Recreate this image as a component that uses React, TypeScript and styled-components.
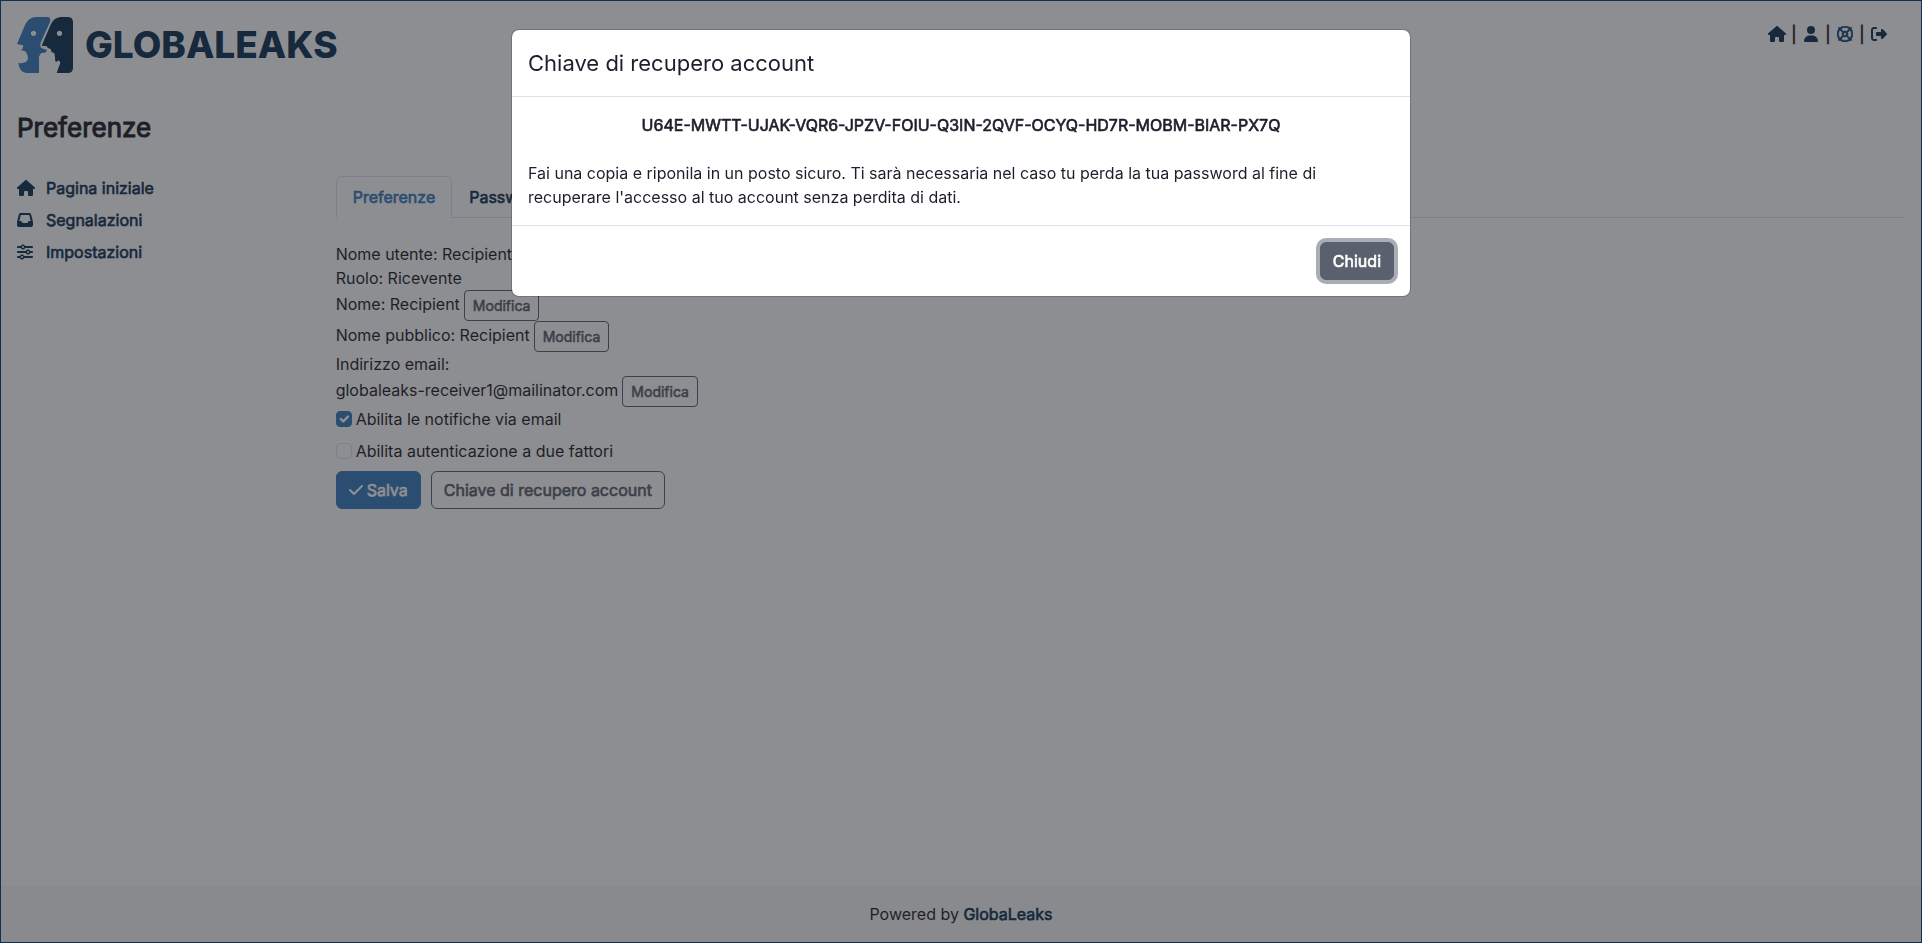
import React from "react";
import styled, { createGlobalStyle, css } from "styled-components";
import {
  FaCheck,
  FaHouse,
  FaInbox,
  FaRegLifeRing,
  FaRightFromBracket,
  FaSliders,
  FaUser,
} from "react-icons/fa6";

const color = {
  text: "#1d1f2b",
  navy: "#103253",
  blue: "#377abc",
  grey: "#5a606d",
  line: "#dce1ec",
  page: "#fdfdfd",
  footer: "#f5f5f5",
};

const GlobalStyle = createGlobalStyle`
  *, *::before, *::after { box-sizing: border-box; }
  body {
    margin: 0;
    background: ${color.page};
    color: ${color.text};
    font-family: Inter, "Liberation Sans", sans-serif;
    font-size: 16px;
    line-height: 24px;
  }
  h1, h2, p, ul { margin: 0; padding: 0; }
  button, input { font: inherit; }
`;

/* Emphasis keeps the regular letter widths and thickens the outline. */
const strong = css`
  font-weight: 400;
  -webkit-text-stroke: 0.04em currentColor;
`;

const Page = styled.div`
  display: flex;
  flex-direction: column;
  min-height: 100vh;
  border: 1px solid #003f84;
`;

const Header = styled.header`
  display: flex;
  justify-content: space-between;
  align-items: flex-start;
  padding: 16px;
`;

const Brand = styled.a`
  display: flex;
  align-items: center;
  gap: 12px;
  color: ${color.navy};
  text-decoration: none;
  font-size: 37px;
  font-weight: 800;
  line-height: 56px;
`;

const Tools = styled.nav`
  display: flex;
  align-items: center;
  padding: 5px 16px;
`;

const ToolLink = styled.a<{ $tone?: string }>`
  display: flex;
  justify-content: center;
  width: 20px;
  color: ${(p) => p.$tone ?? color.navy};
`;

const Divider = styled.span`
  ${strong}
  width: 14px;
  text-align: center;
`;

const Title = styled.h1`
  ${strong}
  padding: 21px 16px 0;
  font-size: 26px;
  line-height: 36px;
`;

const Body = styled.div`
  display: grid;
  grid-template-columns: calc((100% + 24px) / 6 - 24px) 1fr;
  gap: 24px;
  flex: 1;
  align-items: start;
  padding: 30px 16px 0;
`;

const SideMenu = styled.ul`
  display: flex;
  flex-direction: column;
  gap: 8px;
  list-style: none;
`;

const SideLink = styled.a`
  ${strong}
  display: flex;
  align-items: center;
  color: ${color.navy};
  text-decoration: none;
`;

const SideIcon = styled.span`
  display: flex;
  width: 29px;
`;

const TabBar = styled.div`
  display: flex;
  border-bottom: 1px solid ${color.line};
`;

const Tab = styled.button<{ $active?: boolean }>`
  ${strong}
  margin: 0 0 -1px;
  padding: 8px 16px;
  border: 1px solid ${(p) => (p.$active ? color.line : "transparent")};
  border-bottom-color: ${(p) => (p.$active ? color.page : "transparent")};
  border-radius: 6px 6px 0 0;
  background: ${(p) => (p.$active ? color.page : "transparent")};
  color: ${(p) => (p.$active ? color.blue : color.navy)};
`;

const Panel = styled.form`
  display: flex;
  flex-direction: column;
  align-items: flex-start;
  padding-top: 24px;
`;

const Row = styled.div`
  display: flex;
  align-items: flex-start;
  gap: 4px;
  line-height: 28px;
`;

const Line = styled.div`
  line-height: 24px;
`;

const Check = styled.label`
  display: flex;
  align-items: center;
  gap: 4px;
  margin-bottom: 8px;
`;

const CheckBox = styled.input`
  appearance: none;
  width: 16px;
  height: 16px;
  margin: 0;
  border: 1px solid ${color.line};
  border-radius: 4px;
  background: transparent;

  &:checked {
    border-color: ${color.blue};
    background: ${color.blue};
  }
`;

const CheckMark = styled.span`
  display: grid;
  place-items: center;

  > * {
    grid-area: 1 / 1;
  }

  svg {
    pointer-events: none;
  }
`;

const Actions = styled.div`
  display: flex;
  gap: 10px;
`;

type ButtonKind = "primary" | "outline" | "solid";

const Button = styled.button<{ $kind: ButtonKind; $small?: boolean }>`
  ${strong}
  display: inline-flex;
  align-items: center;
  gap: 4px;
  padding: ${(p) => (p.$small ? "4px 8px" : "6px 12px")};
  border: 1px solid ${(p) => (p.$kind === "primary" ? color.blue : color.grey)};
  border-radius: ${(p) => (p.$small ? 4 : 6)}px;
  font-size: ${(p) => (p.$small ? 14 : 16)}px;
  line-height: ${(p) => (p.$small ? 21 : 24)}px;
  background: ${(p) =>
    p.$kind === "primary" ? color.blue : p.$kind === "solid" ? color.grey : "transparent"};
  color: ${(p) => (p.$kind === "outline" ? color.grey : "#fff")};

  svg {
    width: 14px;
    height: 16px;
  }

  &:focus {
    outline: none;
    box-shadow: 0 0 0 4px #a9adb4;
  }
`;

const Footer = styled.footer`
  padding: 16px;
  background: ${color.footer};
  text-align: center;

  a {
    ${strong}
    color: ${color.navy};
    text-decoration: none;
  }
`;

const Backdrop = styled.div`
  position: fixed;
  inset: 0;
  display: flex;
  justify-content: center;
  align-items: flex-start;
  padding: 29px 16px;
  background: rgba(29, 31, 37, 0.5);
`;

const Dialog = styled.section`
  width: 100%;
  max-width: 900px;
  border: 1px solid rgba(0, 0, 0, 0.18);
  border-radius: 8px;
  background: #fff;
  background-clip: padding-box;
`;

const DialogTitle = styled.h2`
  padding: 16px;
  border-bottom: 1px solid ${color.line};
  font-size: 22px;
  font-weight: 400;
  line-height: 34px;
`;

const DialogBody = styled.div`
  display: flex;
  flex-direction: column;
  gap: 24px;
  padding: 16px;
`;

const RecoveryKey = styled.p`
  ${strong}
  text-align: center;
`;

const DialogFooter = styled.div`
  display: flex;
  justify-content: flex-end;
  padding: 16px;
  border-top: 1px solid ${color.line};
`;

function Faces() {
  return (
    <svg width="56" height="56" viewBox="51 51 168 168" aria-hidden="true">
      <path
        fill={color.blue}
        fillRule="evenodd"
        d="M110 51H141Q153 51 151 64L121 130L121 140Q124 146 141 149L138 157Q129 160 123 159L117 170V219H79Q58 217 55 188Q62 192 69 188Q80 188 84 177Q84 163 76 154Q70 151 62 152Q70 148 69 136L51 132L76 73Q86 52 110 51ZM100 92a8 8 0 1 0 1 0Z"
      />
      <path
        fill={color.navy}
        fillRule="evenodd"
        d="M182 51H203Q219 51 219 67V203Q219 219 203 219H170L181 188Q178 179 173 182L168 187Q164 180 165 172L163 159L155 157L152 147L143 144L141 139L125 137L153 72Q162 53 182 51ZM178 92a8 8 0 1 0 1 0Z"
      />
    </svg>
  );
}

const sideLinks = [
  { label: "Pagina iniziale", Icon: FaHouse },
  { label: "Segnalazioni", Icon: FaInbox },
  { label: "Impostazioni", Icon: FaSliders },
];

const tools = [
  { label: "Pagina iniziale", icon: <FaHouse size={18} /> },
  { label: "Preferenze", icon: <FaUser size={16} /> },
  { label: "Aiuto", icon: <FaRegLifeRing size={16} strokeWidth={20} />, tone: "#174678" },
  { label: "Esci", icon: <FaRightFromBracket size={16} /> },
];

function EditButton({ field }: { field: string }) {
  return (
    <Button type="button" $kind="outline" $small aria-label={`Modifica ${field}`}>
      Modifica
    </Button>
  );
}

function Option({ id, label, checked }: { id: string; label: string; checked?: boolean }) {
  return (
    <Check htmlFor={id}>
      <CheckMark>
        <CheckBox id={id} type="checkbox" defaultChecked={checked} />
        {checked && (
          <svg width="16" height="16" viewBox="0 0 20 20" aria-hidden="true">
            <path
              d="M6 10l3 3 6-6"
              fill="none"
              stroke="#fff"
              strokeWidth="3"
              strokeLinecap="round"
              strokeLinejoin="round"
            />
          </svg>
        )}
      </CheckMark>
      {label}
    </Check>
  );
}

export default function App() {
  return (
    <>
      <GlobalStyle />
      <Page>
        <Header>
          <Brand href="#">
            <Faces />
            GLOBALEAKS
          </Brand>
          <Tools>
            {tools.map(({ label, icon, tone }, i) => (
              <React.Fragment key={label}>
                {i > 0 && <Divider>|</Divider>}
                <ToolLink href="#" aria-label={label} $tone={tone}>
                  {icon}
                </ToolLink>
              </React.Fragment>
            ))}
          </Tools>
        </Header>
        <Title>Preferenze</Title>
        <Body>
          <SideMenu>
            {sideLinks.map(({ label, Icon }) => (
              <li key={label}>
                <SideLink href="#">
                  <SideIcon>
                    <Icon size={Icon === FaHouse ? 18 : 16} />
                  </SideIcon>
                  {label}
                </SideLink>
              </li>
            ))}
          </SideMenu>
          <main>
            <TabBar role="tablist">
              <Tab role="tab" aria-selected="true" $active>
                Preferenze
              </Tab>
              <Tab role="tab" aria-selected="false">
                Password
              </Tab>
            </TabBar>
            <Panel>
              <Line>Nome utente: Recipient</Line>
              <Line>Ruolo: Ricevente</Line>
              <Row>
                Nome: Recipient
                <EditButton field="nome" />
              </Row>
              <Row>
                Nome pubblico: Recipient
                <EditButton field="nome pubblico" />
              </Row>
              <Line>Indirizzo email:</Line>
              <Row>
                globaleaks-receiver1@mailinator.com
                <EditButton field="indirizzo email" />
              </Row>
              <Option id="notifications" label="Abilita le notifiche via email" checked />
              <Option id="two-factor" label="Abilita autenticazione a due fattori" />
              <Actions>
                <Button type="button" $kind="primary">
                  <FaCheck />
                  Salva
                </Button>
                <Button type="button" $kind="outline">
                  Chiave di recupero account
                </Button>
              </Actions>
            </Panel>
          </main>
        </Body>
        <Footer>
          Powered by <a href="#">GlobaLeaks</a>
        </Footer>
      </Page>
      <Backdrop>
        <Dialog role="dialog" aria-modal="true" aria-labelledby="dialog-title">
          <DialogTitle id="dialog-title">Chiave di recupero account</DialogTitle>
          <DialogBody>
            <RecoveryKey>
              U64E-MWTT-UJAK-VQR6-JPZV-FOIU-Q3IN-2QVF-OCYQ-HD7R-MOBM-BIAR-PX7Q
            </RecoveryKey>
            <p>
              Fai una copia e riponila in un posto sicuro. Ti sarà necessaria nel caso tu perda la
              tua password al fine di recuperare l'accesso al tuo account senza perdita di dati.
            </p>
          </DialogBody>
          <DialogFooter>
            <Button type="button" $kind="solid" autoFocus>
              Chiudi
            </Button>
          </DialogFooter>
        </Dialog>
      </Backdrop>
    </>
  );
}
